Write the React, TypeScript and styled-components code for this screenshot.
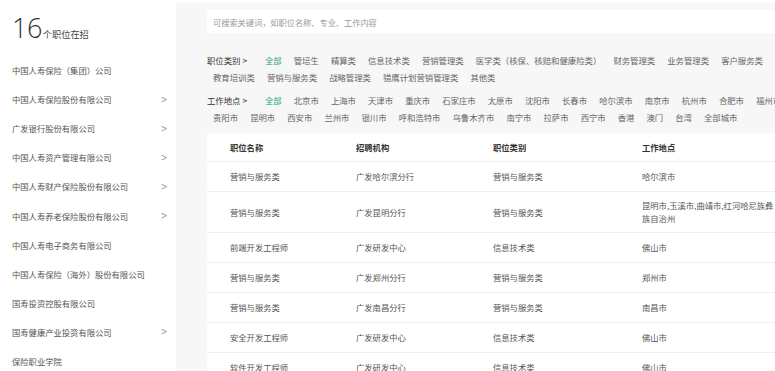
import { createGlobalStyle, styled } from "styled-components";

const GlobalStyle = createGlobalStyle`
  html, body {
    margin: 0;
    padding: 0;
    background: #ffffff;
    overflow: hidden;
  }
  body {
    font-family: "Noto Sans CJK SC", "Noto Sans", sans-serif;
  }
`;

const Page = styled.div`
  display: flex;
  width: 880px;
  height: 371px;
  align-items: flex-start;
`;

const Sidebar = styled.aside`
  width: 176px;
  flex: 0 0 176px;
  background: #fff;
`;

const SideHeader = styled.div`
  height: 55.5px;
  box-sizing: border-box;
  padding: 13px 0 0 12px;
  display: flex;
  align-items: baseline;
  color: #333;
`;

const BigCount = styled.span`
  font-family: "Open Sans", "Noto Sans", sans-serif;
  font-weight: 300;
  font-size: 27px;
  line-height: 30px;
  letter-spacing: -0.5px;
`;

const CountLabel = styled.span`
  font-size: 9.2px;
  color: #444;
  margin-left: 1px;
`;

const CompanyList = styled.ul`
  list-style: none;
  margin: 0;
  padding: 0;
`;

const CompanyItem = styled.li`
  height: 29.1px;
  display: flex;
  align-items: center;
  justify-content: space-between;
  padding: 0 8px 0 12px;
  font-size: 8.3px;
  color: #555;
`;

const Chevron = styled.span`
  font-size: 10px;
  color: #999;
  font-family: "DejaVu Sans", sans-serif;
  transform: scaleX(0.8);
`;

const Main = styled.main`
  flex: 1;
  background: #f7f7f7;
  margin-top: 3px;
  padding: 7px 35px 0 31px;
  height: 368px;
  box-sizing: border-box;
`;

const SearchBox = styled.div`
  height: 23px;
  background: #fff;
  display: flex;
  align-items: center;
  padding-left: 6px;
  font-size: 8.2px;
  color: #999;
`;

const Filters = styled.div`
  margin-top: 19px;
  display: flex;
  flex-direction: column;
  gap: 6px;
`;

const FilterRow = styled.div`
  display: flex;
  flex-wrap: wrap;
  line-height: 17px;
  font-size: 8.4px;
`;

const FilterLabel = styled.span`
  color: #333;
  width: 52px;
`;

const FilterItem = styled.span<{ $active?: boolean }>`
  padding: 0 6px;
  color: ${(p) => (p.$active ? "#27a86e" : "#666")};
  white-space: nowrap;
`;

const TableCard = styled.div`
  margin-top: 7px;
  background: #fff;
`;

const Row = styled.div<{ $head?: boolean }>`
  display: grid;
  grid-template-columns: 126px 137px 149px 132px;
  padding-left: 23px;
  align-items: center;
  min-height: ${(p) => (p.$head ? "29px" : "30px")};
  box-sizing: border-box;
  padding-top: 7px;
  padding-bottom: 7px;
  border-bottom: 1px solid #efefef;
  font-size: 8.3px;
  line-height: 13px;
  color: ${(p) => (p.$head ? "#333" : "#555")};
  font-weight: ${(p) => (p.$head ? 700 : 400)};
`;

const Cell = styled.span``;

const companies: { name: string; more?: boolean }[] = [
  { name: "中国人寿保险（集团）公司" },
  { name: "中国人寿保险股份有限公司", more: true },
  { name: "广发银行股份有限公司", more: true },
  { name: "中国人寿资产管理有限公司", more: true },
  { name: "中国人寿财产保险股份有限公司", more: true },
  { name: "中国人寿养老保险股份有限公司", more: true },
  { name: "中国人寿电子商务有限公司" },
  { name: "中国人寿保险（海外）股份有限公司" },
  { name: "国寿投资控股有限公司" },
  { name: "国寿健康产业投资有限公司", more: true },
  { name: "保险职业学院" },
];

const categories = [
  "全部",
  "管培生",
  "精算类",
  "信息技术类",
  "营销管理类",
  "医学类（核保、核赔和健康险类）",
  "财务管理类",
  "业务管理类",
  "客户服务类",
  "法律合规类",
  "教育培训类",
  "营销与服务类",
  "战略管理类",
  "猎鹰计划营销管理类",
  "其他类",
];

const cities = [
  "全部",
  "北京市",
  "上海市",
  "天津市",
  "重庆市",
  "石家庄市",
  "太原市",
  "沈阳市",
  "长春市",
  "哈尔滨市",
  "南京市",
  "杭州市",
  "合肥市",
  "福州市",
  "南昌市",
  "贵阳市",
  "昆明市",
  "西安市",
  "兰州市",
  "银川市",
  "呼和浩特市",
  "乌鲁木齐市",
  "南宁市",
  "拉萨市",
  "西宁市",
  "香港",
  "澳门",
  "台湾",
  "全部城市",
];

const jobs = [
  ["营销与服务类", "广发哈尔滨分行", "营销与服务类", "哈尔滨市"],
  ["营销与服务类", "广发昆明分行", "营销与服务类", "昆明市,玉溪市,曲靖市,红河哈尼族彝族自治州"],
  ["前端开发工程师", "广发研发中心", "信息技术类", "佛山市"],
  ["营销与服务类", "广发郑州分行", "营销与服务类", "郑州市"],
  ["营销与服务类", "广发南昌分行", "营销与服务类", "南昌市"],
  ["安全开发工程师", "广发研发中心", "信息技术类", "佛山市"],
  ["软件开发工程师", "广发研发中心", "信息技术类", "佛山市"],
];

export default function App() {
  return (
    <>
      <GlobalStyle />
      <Page>
        <Sidebar>
          <SideHeader>
            <BigCount>16</BigCount>
            <CountLabel>个职位在招</CountLabel>
          </SideHeader>
          <CompanyList>
            {companies.map((c) => (
              <CompanyItem key={c.name}>
                <span>{c.name}</span>
                {c.more && <Chevron>&gt;</Chevron>}
              </CompanyItem>
            ))}
          </CompanyList>
        </Sidebar>
        <Main>
          <SearchBox>可搜索关键词，如职位名称、专业、工作内容</SearchBox>
          <Filters>
            <FilterRow>
              <FilterLabel>职位类别 &gt;</FilterLabel>
              {categories.map((c, i) => (
                <FilterItem key={c} $active={i === 0}>
                  {c}
                </FilterItem>
              ))}
            </FilterRow>
            <FilterRow>
              <FilterLabel>工作地点 &gt;</FilterLabel>
              {cities.map((c, i) => (
                <FilterItem key={c} $active={i === 0}>
                  {c}
                </FilterItem>
              ))}
            </FilterRow>
          </Filters>
          <TableCard>
            <Row $head>
              <Cell>职位名称</Cell>
              <Cell>招聘机构</Cell>
              <Cell>职位类别</Cell>
              <Cell>工作地点</Cell>
            </Row>
            {jobs.map((job, index) => (
              <Row key={index}>
                {job.map((value, k) => (
                  <Cell key={k}>{value}</Cell>
                ))}
              </Row>
            ))}
          </TableCard>
        </Main>
      </Page>
    </>
  );
}
